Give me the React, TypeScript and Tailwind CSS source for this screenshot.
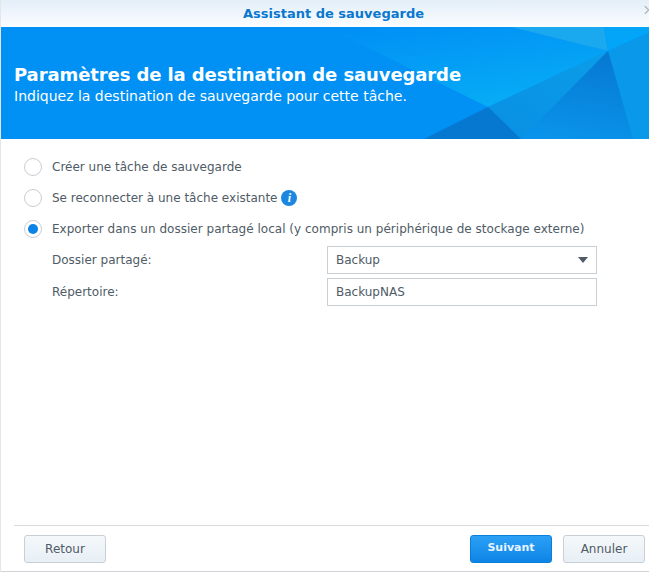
import { ChevronRight } from "lucide-react"

function Radio({ checked }: { checked?: boolean }) {
  return (
    <span className="w-[18px] h-[18px] shrink-0 rounded-full border border-[#c8ced4] bg-white flex items-center justify-center">
      {checked && <span className="w-[10px] h-[10px] rounded-full bg-[#0a82e6]" />}
    </span>
  )
}

function BannerArt() {
  return (
    <svg className="absolute inset-0" width="649" height="112" viewBox="0 27 649 112">
      <defs>
        <linearGradient id="glow" x1="0.25" y1="0" x2="0.7" y2="1">
          <stop offset="0" stopColor="#0191f5" />
          <stop offset="1" stopColor="#07aef5" />
        </linearGradient>
        <linearGradient id="mid" x1="1" y1="0" x2="0" y2="1">
          <stop offset="0" stopColor="#0a9de8" />
          <stop offset="1" stopColor="#0a8fe4" />
        </linearGradient>
        <linearGradient id="low" x1="0.6" y1="0" x2="0.4" y2="1">
          <stop offset="0" stopColor="#0679d2" />
          <stop offset="1" stopColor="#0a93ea" />
        </linearGradient>
      </defs>
      <polygon points="325,27 510,27 607,51 487,107" fill="url(#glow)" />
      <polygon points="510,27 603,27 607,51" fill="#1aa8ee" />
      <polygon points="603,27 649,27 649,32 607,51" fill="#03a5f8" />
      <polygon points="607,51 649,32 649,139 632,139" fill="#0a99ea" />
      <polygon points="607,51 487,107 520,139" fill="url(#mid)" />
      <polygon points="607,51 520,139 632,139" fill="url(#low)" />
      <polygon points="487,107 520,139 423,139" fill="#0678d0" />
    </svg>
  )
}

export default function App() {
  return (
    <div className="w-[649px] h-[572px] bg-white flex flex-col overflow-hidden border-l border-[#e4e6e8] font-['DejaVu_Sans',sans-serif] text-[#4f5b66] text-[12px] relative">
      <div className="h-[27px] shrink-0 flex items-center justify-center pl-[17px] bg-gradient-to-b from-[#e3eef8] to-[#fbfdff] text-[#0a78cf] font-bold text-[13px]">
        Assistant de sauvegarde
      </div>
      <ChevronRight className="absolute right-[-5px] top-[3px] text-[#aab2ba]" size={14} />

      <div className="h-[112px] shrink-0 bg-[#0191f5] relative overflow-hidden">
        <BannerArt />
        <div className="relative pl-[13px] pt-[37px] text-white">
          <div className="font-bold text-[18px] tracking-[-0.1px] leading-[22px]">Paramètres de la destination de sauvegarde</div>
          <div className="text-[14px] leading-[15px] mt-[3px]">Indiquez la destination de sauvegarde pour cette tâche.</div>
        </div>
      </div>

      <div className="flex-1 pl-[23px] pt-[12px]">
        <div className="h-[31px] flex items-center gap-[10px]">
          <Radio />
          <span>Créer une tâche de sauvegarde</span>
        </div>
        <div className="h-[31px] flex items-center gap-[10px]">
          <Radio />
          <span>Se reconnecter à une tâche existante</span>
          <span className="w-4 h-4 -ml-[6px] rounded-full bg-[#1b87e0] text-white flex items-center justify-center font-['Liberation_Serif',serif] italic font-bold text-[12px]">i</span>
        </div>
        <div className="h-[31px] flex items-center gap-[10px]">
          <Radio checked />
          <span className="tracking-[0.02px]">Exporter dans un dossier partagé local (y compris un périphérique de stockage externe)</span>
        </div>
        <div className="flex items-center h-[32px] pl-[28px]">
          <span className="w-[275px]">Dossier partagé:</span>
          <div className="w-[270px] h-[28px] border border-[#c8d0d6] flex items-center justify-between px-2">
            <span>Backup</span>
            <span className="w-0 h-0 border-x-[5px] border-x-transparent border-t-[6px] border-t-[#4f5b66]" />
          </div>
        </div>
        <div className="flex items-center h-[32px] pl-[28px]">
          <span className="w-[275px]">Répertoire:</span>
          <div className="w-[270px] h-[28px] border border-[#c8d0d6] flex items-center px-2">BackupNAS</div>
        </div>
      </div>

      <div className="ml-[13px] border-t border-[#d8dcdf] h-[46px] flex items-center justify-between pl-[10px] pr-[4px] shrink-0">
        <button className="w-[82px] h-[28px] rounded-[3px] border border-[#c8d0d6] bg-gradient-to-b from-[#f4f8fb] to-[#e8eff5]">Retour</button>
        <div className="flex gap-[11px]">
          <button className="w-[82px] h-[28px] rounded-[3px] border border-[#0a7fd8] bg-gradient-to-b from-[#2ba0f5] to-[#0c84e6] text-[#e8f4ff] font-bold text-[11px]">Suivant</button>
          <button className="w-[82px] h-[28px] rounded-[3px] border border-[#c8d0d6] bg-gradient-to-b from-[#f4f8fb] to-[#e8eff5]">Annuler</button>
        </div>
      </div>
      <div className="h-px bg-[#d0d4d8] shrink-0" />
    </div>
  )
}
